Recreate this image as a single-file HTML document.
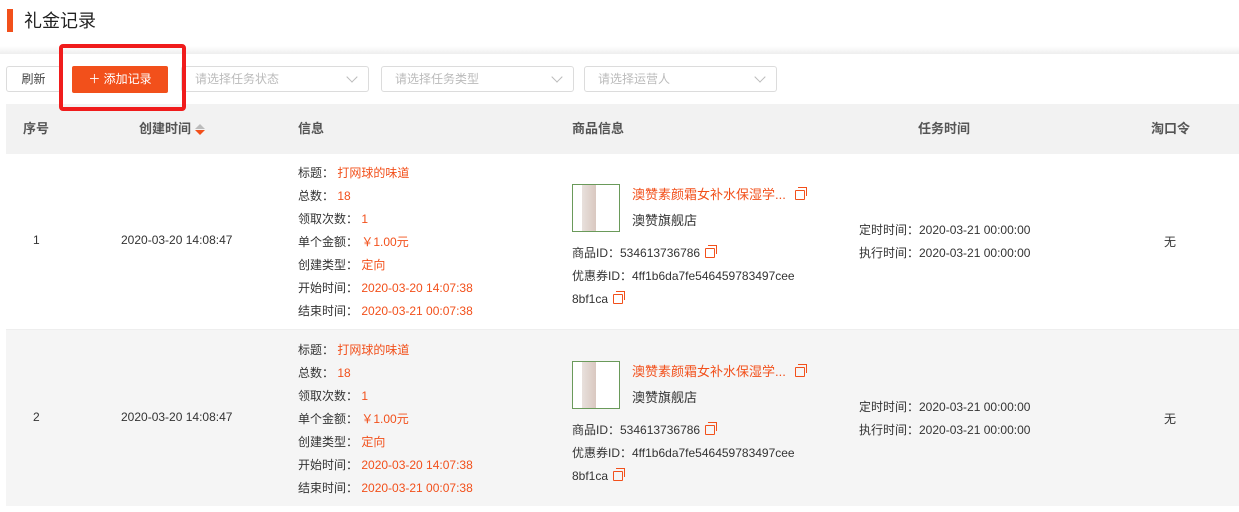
<html><head><style>
body{margin:0;width:1239px;height:512px;overflow:hidden;background:#fff;font-family:"Liberation Sans","Noto Sans CJK SC",sans-serif;font-size:12px;color:#333;position:relative}
.a{position:absolute;white-space:nowrap}
.o{color:#f2501b}
.sel{position:absolute;top:66px;height:26px;border:1px solid #dcdcdc;border-radius:3px;width:188px;box-sizing:border-box;color:#bbb;font-size:12px;line-height:24px;padding-left:13px}
.sel:after{content:"";position:absolute;right:12px;top:6px;width:7px;height:7px;border-right:1px solid #bbb;border-bottom:1px solid #bbb;transform:rotate(45deg)}
.th{position:absolute;top:104px;height:50px;line-height:50px;font-size:13px;color:#555;font-weight:bold}
.cp{display:inline-block;width:8px;height:8px;border:1px solid #f2501b;border-radius:1px;margin-left:5px;position:relative;vertical-align:-1px}
.cp:before{content:"";position:absolute;left:2px;top:-4px;width:8px;height:8px;border:1px solid #f2501b;border-left:none;border-bottom:none}
.img{position:absolute;width:48px;height:48px;border:1px solid #6a9a5a;box-sizing:border-box;background:linear-gradient(90deg,#fff 0,#fff 20%,#e8e0dc 20%,#d9c8c0 50%,#fff 50%)}
</style></head><body>
<div class="a" style="left:7px;top:9px;width:6px;height:23px;background:#f2501b"></div>
<div class="a" style="left:24px;top:7px;font-size:18px;color:#222">礼金记录</div>
<div class="a" style="left:0;top:46px;width:1239px;height:8px;background:linear-gradient(#fff,#eee)"></div>
<div class="a" style="left:6px;top:66px;width:55px;height:26px;border:1px solid #dcdcdc;border-radius:3px;box-sizing:border-box;text-align:center;line-height:24px;color:#444">刷新</div>
<div class="a" style="left:72px;top:66px;width:96px;height:27px;background:#f2501b;border-radius:2px;color:#fff;text-align:center;line-height:27px">＋ 添加记录</div>
<div class="sel" style="left:181px">请选择任务状态</div>
<div class="sel" style="left:381px;width:193px">请选择任务类型</div>
<div class="sel" style="left:584px;width:193px">请选择运营人</div>
<div class="a" style="left:6px;top:104px;width:1233px;height:50px;background:#f2f2f2"></div>
<div class="th" style="left:23px">序号</div>
<div class="th" style="left:139px">创建时间 <span style="display:inline-block;vertical-align:middle;line-height:0"><span style="display:block;width:0;height:0;border:5px solid transparent;border-bottom-color:#bbb;border-top:none;margin-bottom:1px"></span><span style="display:block;width:0;height:0;border:5px solid transparent;border-top-color:#f2501b;border-bottom:none"></span></span></div>
<div class="th" style="left:298px">信息</div>
<div class="th" style="left:572px">商品信息</div>
<div class="th" style="left:918px">任务时间</div>
<div class="th" style="left:1151px">淘口令</div>
<div class="a" style="left:6px;top:330px;width:1233px;height:176px;background:#f5f5f5"></div>
<div class="a" style="left:6px;top:329px;width:1233px;height:1px;background:#eee"></div>

<div class="a" style="left:33px;top:233px">1</div>
<div class="a" style="left:121px;top:233px">2020-03-20 14:08:47</div>
<div class="a" style="left:298px;top:162px;line-height:23px">标题： <span class="o">打网球的味道</span><br>总数： <span class="o">18</span><br>领取次数： <span class="o">1</span><br>单个金额： <span class="o">￥1.00元</span><br>创建类型： <span class="o">定向</span><br>开始时间： <span class="o">2020-03-20 14:07:38</span><br>结束时间： <span class="o">2020-03-21 00:07:38</span></div>
<div class="img" style="left:572px;top:184px"></div>
<div class="a" style="left:632px;top:184px;font-size:13px"><span class="o">澳赞素颜霜女补水保湿学...</span><span class="cp" style="margin-left:9px"></span></div>
<div class="a" style="left:632px;top:210px;font-size:13px">澳赞旗舰店</div>
<div class="a" style="left:572px;top:242px;line-height:23px">商品ID：534613736786<span class="cp"></span><br>优惠券ID：4ff1b6da7fe546459783497cee<br>8bf1ca<span class="cp"></span></div>
<div class="a" style="left:859px;top:219px;line-height:23px">定时时间：2020-03-21 00:00:00<br>执行时间：2020-03-21 00:00:00</div>
<div class="a" style="left:1164px;top:233px">无</div>

<div class="a" style="left:33px;top:410px">2</div>
<div class="a" style="left:121px;top:410px">2020-03-20 14:08:47</div>
<div class="a" style="left:298px;top:339px;line-height:23px">标题： <span class="o">打网球的味道</span><br>总数： <span class="o">18</span><br>领取次数： <span class="o">1</span><br>单个金额： <span class="o">￥1.00元</span><br>创建类型： <span class="o">定向</span><br>开始时间： <span class="o">2020-03-20 14:07:38</span><br>结束时间： <span class="o">2020-03-21 00:07:38</span></div>
<div class="img" style="left:572px;top:361px"></div>
<div class="a" style="left:632px;top:361px;font-size:13px"><span class="o">澳赞素颜霜女补水保湿学...</span><span class="cp" style="margin-left:9px"></span></div>
<div class="a" style="left:632px;top:387px;font-size:13px">澳赞旗舰店</div>
<div class="a" style="left:572px;top:419px;line-height:23px">商品ID：534613736786<span class="cp"></span><br>优惠券ID：4ff1b6da7fe546459783497cee<br>8bf1ca<span class="cp"></span></div>
<div class="a" style="left:859px;top:396px;line-height:23px">定时时间：2020-03-21 00:00:00<br>执行时间：2020-03-21 00:00:00</div>
<div class="a" style="left:1164px;top:410px">无</div>
<div class="a" style="left:59px;top:44px;width:127px;height:67px;border:4px solid #f01c1c;border-radius:4px;box-sizing:border-box"></div>
</body></html>
